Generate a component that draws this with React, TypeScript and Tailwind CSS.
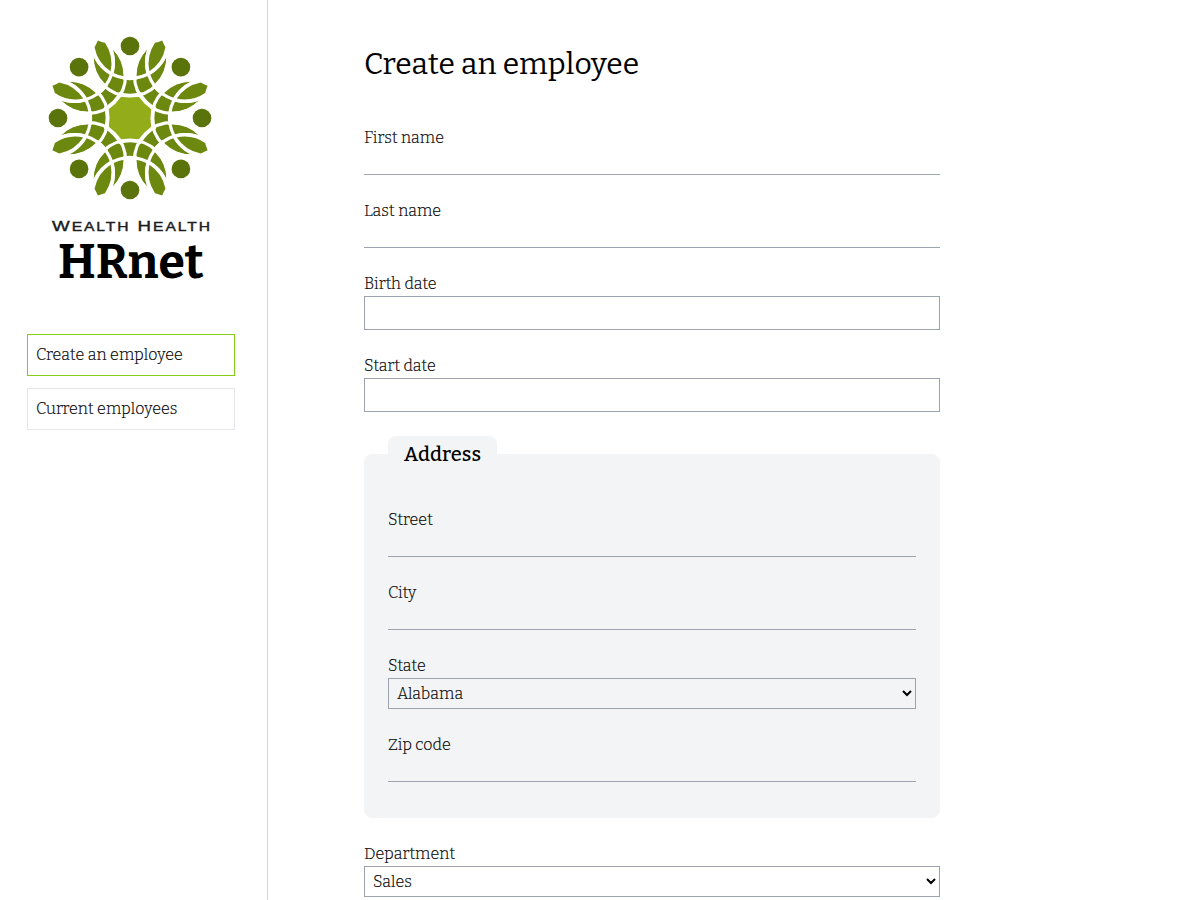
import React from 'react';

const ANGLES = [0, 45, 90, 135, 180, 225, 270, 315];

function Emblem() {
  return (
    <svg viewBox="-270 -264 540 540" className="h-[180px] w-[180px]" aria-hidden="true">
      <circle r="69" fill="#92ad19" />
      {ANGLES.map((a) => (
        <path
          key={a}
          transform={`rotate(${a})`}
          fill="#6c880f"
          d="M-109 -182 A109 109 0 0 0 109 -182 A121 121 0 0 1 -109 -182Z"
        />
      ))}
      {ANGLES.map((a) => (
        <g key={a} transform={`rotate(${a})`} fill="none" stroke="#fff" strokeWidth="9.5">
          <path d="M-114 -180 A114 114 0 0 0 114 -180" />
          <path d="M-110 -198 A116 116 0 0 0 110 -198" />
        </g>
      ))}
      {ANGLES.map((a) => (
        <path
          key={a}
          transform={`rotate(${a + 22.5})`}
          fill="#6c880f"
          d="M0 -152 A111 111 0 0 1 -17 -237 Q-9 -243 0 -252 Q9 -243 17 -237 A111 111 0 0 1 0 -152Z"
        />
      ))}
      {ANGLES.map((a) => (
        <circle key={a} transform={`rotate(${a})`} cy="-216" r="28" fill="#5a730b" />
      ))}
    </svg>
  );
}

const line = 'block h-[25px] w-full border-b border-[#9ca3af] bg-transparent outline-none';
const box = 'block h-[34px] w-full border border-[#9ca3af] bg-transparent px-2 outline-none';

function Field({ label, boxed = false }: { label: string; boxed?: boolean }) {
  return (
    <label className="block">
      <span className="block h-6 leading-6">{label}</span>
      <input type="text" className={boxed ? box : line} />
    </label>
  );
}

function Choice({ label, value }: { label: string; value: string }) {
  return (
    <label className="block">
      <span className="block h-6 leading-6">{label}</span>
      <select className="block h-[31px] w-full border border-[#9ca3af] bg-transparent px-1">
        <option>{value}</option>
      </select>
    </label>
  );
}

export default function App() {
  return (
    <div className="flex h-[900px] overflow-hidden bg-white font-[Bitter,serif] text-base font-light tracking-[0.09px] text-black [-webkit-text-stroke:0.2px_#000]">
      <aside className="flex w-[268px] shrink-0 flex-col border-r border-[#d1d5db] pt-[30px] pr-8 pl-[27px]">
        <div className="flex flex-col pl-[13px]">
          <Emblem />
          <svg viewBox="0 0 180 28" className="h-7 w-[180px]">
            <text
              transform="translate(12 21) scale(1.25 1)"
              fontFamily="'Liberation Sans', sans-serif"
              fontWeight="400"
              fill="#1c1c1c"
              stroke="#1c1c1c"
              strokeWidth="0.4"
              fontSize="15"
              letterSpacing="1.55"
            >
              W<tspan fontSize="12.5">EALTH</tspan> H<tspan fontSize="12.5">EALTH</tspan>
            </text>
          </svg>
        </div>
        <p className="h-12 pl-[31px] text-5xl leading-[48px] font-bold tracking-normal text-black [-webkit-text-stroke:0]">HRnet</p>
        <nav className="mt-12 flex flex-col gap-3">
          <a className="h-[42px] border border-[#84cc16] px-2 leading-10">Create an employee</a>
          <a className="h-[42px] border border-[#e5e7eb] px-2 leading-10">Current employees</a>
        </nav>
      </aside>
      <main className="w-[672px] pt-11 pl-24">
        <h1 className="h-10 text-3xl leading-10 font-normal tracking-[0.05px] whitespace-nowrap [-webkit-text-stroke:0]">Create an employee</h1>
        <form className="mt-[42px] flex flex-col gap-6">
          <Field label="First name" />
          <Field label="Last name" />
          <Field label="Birth date" boxed />
          <Field label="Start date" boxed />
          <fieldset className="rounded-lg bg-[#f3f4f6] px-6 pb-9">
            <legend className="h-9 rounded-lg bg-[#f3f4f6] px-4 text-xl leading-9 font-medium tracking-[0.12px] [-webkit-text-stroke:0]">Address</legend>
            <div className="flex flex-col gap-6 pt-9">
              <Field label="Street" />
              <Field label="City" />
              <Choice label="State" value="Alabama" />
              <Field label="Zip code" />
            </div>
          </fieldset>
          <Choice label="Department" value="Sales" />
        </form>
      </main>
    </div>
  );
}
